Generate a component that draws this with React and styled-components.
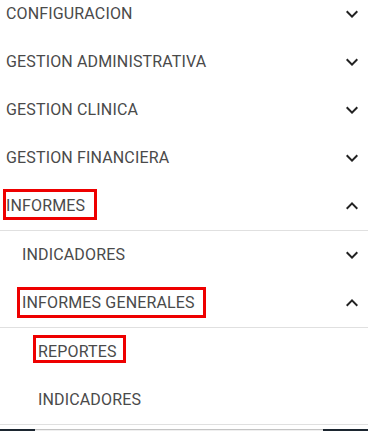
import React from 'react'
import styled, { createGlobalStyle } from 'styled-components'

const Global = createGlobalStyle`
  html, body {
    margin: 0;
    padding: 0;
    background: #fff;
  }
  body {
    font-family: Roboto, 'Liberation Sans', sans-serif;
  }
`

const Page = styled('div')`
  height: 100vh;
  display: flex;
  flex-direction: column;
  overflow: hidden;
`

const Menu = styled('nav')`
  flex: 1;
  margin-top: -10px;
`

const Panel = styled('div')`
  border-bottom: ${(p) => (p.$divided ? '1px solid #e0e0e0' : 'none')};
`

const Header = styled('div')`
  display: flex;
  align-items: center;
  height: 48px;
  padding-left: ${(p) => 6 + p.$level * 16}px;
  padding-right: 4px;
  border-bottom: ${(p) => (p.$open ? '1px solid #e0e0e0' : 'none')};
  cursor: pointer;
`

const Label = styled('span')`
  flex: 1;
  font-size: 16px;
  font-weight: 400;
  letter-spacing: 0.15px;
  line-height: 48px;
  color: #4a4a4a;
  text-transform: uppercase;
  white-space: nowrap;
`

const Mark = styled('span')`
  display: inline-block;
  line-height: 16px;
  border: 3px solid #ee0000;
  margin-left: ${(p) => p.$shift}px;
  padding: ${(p) => p.$top}px ${(p) => p.$right}px ${(p) => p.$bottom}px ${(p) => p.$left}px;
`

const Chevron = styled('svg')`
  width: 24px;
  height: 24px;
  fill: #222;
  flex-shrink: 0;
`

const Footer = styled('div')`
  display: flex;
  height: 2px;
  flex-shrink: 0;
`

const Dark = styled('div')`
  width: ${(p) => p.$w}px;
  background: #1c2630;
`

const Track = styled('div')`
  flex: 1;
  background: #efefef;
  border-top: 1px solid #c4c4c4;
`

const Arrow = ({ up }) => (
  <Chevron viewBox="0 0 24 24">
    {up ? (
      <path d="M12 8l-6 6 1.41 1.41L12 10.83l4.59 4.58L18 14z" />
    ) : (
      <path d="M16.59 8.59L12 13.17 7.41 8.59 6 10l6 6 6-6z" />
    )}
  </Chevron>
)

const Item = ({ level = 0, open, arrow = true, mark, children }) => (
  <Header $level={level} $open={open}>
    <Label>{mark ? <Mark {...mark}>{children}</Mark> : children}</Label>
    {arrow && <Arrow up={open} />}
  </Header>
)

const App = () => {
  return (
    <>
      <Global />
      <Page>
        <Menu>
          <Item>Configuracion</Item>
          <Item>Gestion Administrativa</Item>
          <Item>Gestion Clinica</Item>
          <Item>Gestion Financiera</Item>
          <Panel $divided>
            <Item open mark={{ $shift: -3, $left: 0, $right: 9, $top: 6, $bottom: 3 }}>
              Informes
            </Item>
            <Item level={1}>Indicadores</Item>
            <Item level={1} open mark={{ $shift: -5, $left: 2, $right: 8, $top: 5, $bottom: 4 }}>
              Informes Generales
            </Item>
            <Item level={2} arrow={false} mark={{ $shift: -5, $left: 2, $right: 6, $top: 6, $bottom: 0 }}>
              Reportes
            </Item>
            <Item level={2} arrow={false}>
              Indicadores
            </Item>
          </Panel>
        </Menu>
        <Footer>
          <Dark $w={35} />
          <Track />
          <Dark $w={45} />
        </Footer>
      </Page>
    </>
  )
}

export default App
